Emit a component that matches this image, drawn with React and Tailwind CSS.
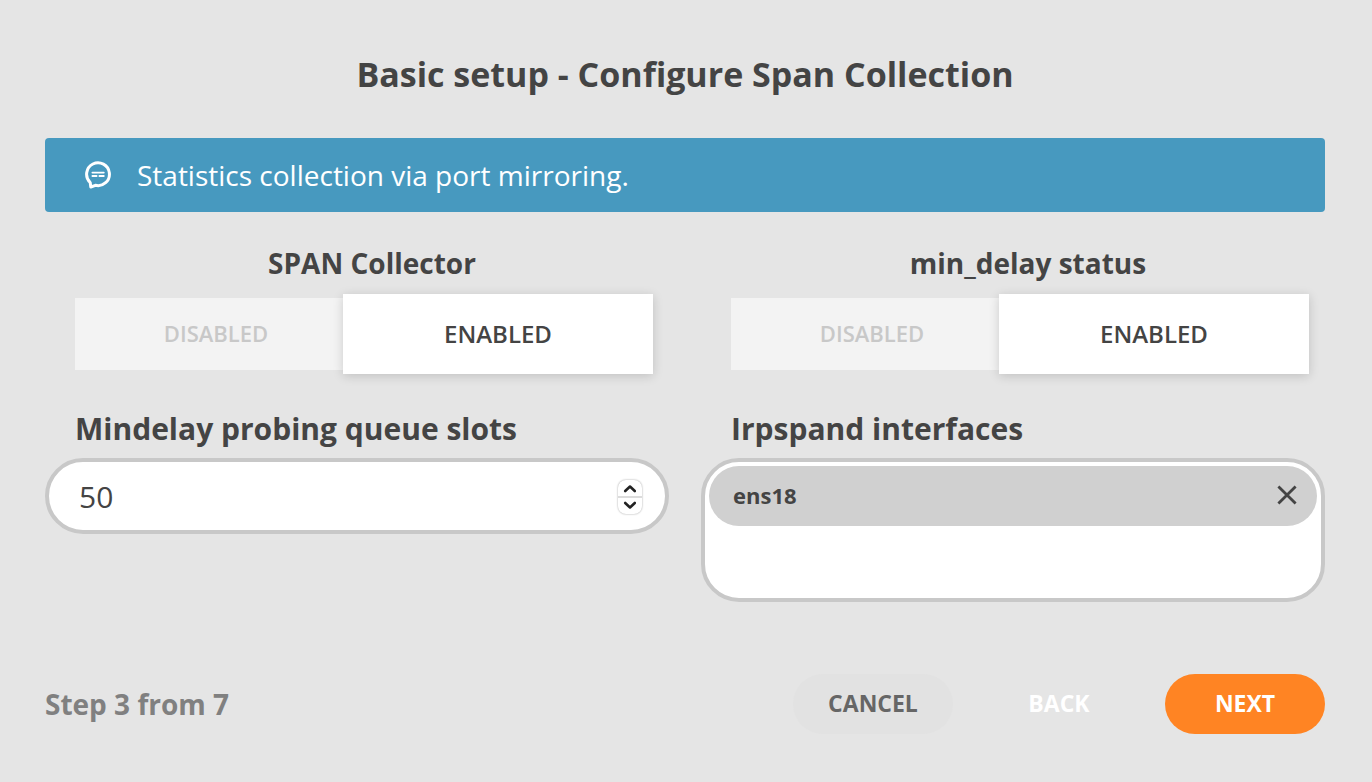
import React, {useState} from "react";

function Toggle({name, label}) {

    const [enabled, setEnabled] = useState(true);

    const base = "shrink-0 flex items-center justify-center cursor-pointer font-semibold";
    const on = "relative w-[calc(50%+28px)] h-20 -my-1 -mx-3.5 bg-white text-2xl text-[#444444] shadow-[0_2px_10px_rgba(0,0,0,0.16)]";
    const off = "w-1/2 h-[72px] pb-0.5 text-[22px] text-[#c8c8c8]";

    return (
        <fieldset className="min-w-0">
            <legend className="w-full pl-[30px] text-center text-[28px] leading-[38px] font-bold">{label}</legend>
            <div className="mt-4 mx-[30px] flex bg-[#f3f3f3]">
                <label className={`${base} ${enabled ? off : on}`}>
                    <input className="sr-only" type="radio" name={name} checked={!enabled} onChange={() => setEnabled(false)}/>
                    DISABLED
                </label>
                <label className={`${base} ${enabled ? on : off}`}>
                    <input className="sr-only" type="radio" name={name} checked={enabled} onChange={() => setEnabled(true)}/>
                    ENABLED
                </label>
            </div>
        </fieldset>
    );
}

function NumberField({id, label}) {

    const [value, setValue] = useState(50);

    return (
        <div>
            <label htmlFor={id} className="block pl-[30px] text-[30px] leading-[38px] font-bold">{label}</label>
            <div className="mt-2.5 h-[76px] flex items-center rounded-full border-4 border-[#c8c8c8] bg-white pt-0.5 pl-[30px] pr-[23px]">
                <input
                    id={id}
                    className="flex-1 min-w-0 text-[30px] leading-10 bg-transparent outline-none [appearance:textfield] [&::-webkit-inner-spin-button]:appearance-none"
                    type="number"
                    value={value}
                    onChange={(e) => setValue(Number(e.target.value))}
                />
                <div className="w-6 h-[34px] flex flex-col rounded-lg bg-white shadow-[0_0_2px_rgba(0,0,0,0.4)] overflow-hidden">
                    <button type="button" aria-label="Increase" className="flex-1 flex items-center justify-center border-b border-[#dcdcdc]" onClick={() => setValue(value + 1)}>
                        <svg width="14" height="10" viewBox="0 0 14 10" fill="none" stroke="#222222" strokeWidth="2.6" strokeLinecap="round" strokeLinejoin="round"><path d="M2.2 8 7 3.5l4.8 4.5"/></svg>
                    </button>
                    <button type="button" aria-label="Decrease" className="flex-1 flex items-center justify-center border-t border-[#dcdcdc]" onClick={() => setValue(value - 1)}>
                        <svg width="14" height="10" viewBox="0 0 14 10" fill="none" stroke="#222222" strokeWidth="2.6" strokeLinecap="round" strokeLinejoin="round"><path d="M2.2 2 7 6.5l4.8-4.5"/></svg>
                    </button>
                </div>
            </div>
        </div>
    );
}

function TagField({id, label}) {

    const [tags, setTags] = useState(["ens18"]);
    const [text, setText] = useState("");

    const onKeyDown = (e) => {
        if(e.key === "Enter" && text) {
            e.preventDefault();
            setTags([...tags, text]);
            setText("");
        }
    };

    return (
        <div>
            <label htmlFor={id} className="block pl-[30px] text-[30px] leading-[38px] font-bold">{label}</label>
            <div className="mt-2.5 rounded-[38px] border-4 border-[#c8c8c8] bg-white p-1">
                {tags.map(tag => (
                    <div key={tag} className="h-[60px] flex items-center justify-between rounded-full bg-[#d0d0d0] pb-0.5 pl-6 pr-5 text-[22px] font-bold">
                        {tag}
                        <button type="button" aria-label={"Remove " + tag} onClick={() => setTags(tags.filter(t => t !== tag))}>
                            <svg width="20" height="20" viewBox="0 0 20 20" fill="none" stroke="#444444" strokeWidth="2.8"><path d="M1.4 1.4l17.2 17.2M18.6 1.4L1.4 18.6"/></svg>
                        </button>
                    </div>
                ))}
                <input id={id} className="block w-full h-[68px] px-6 text-[22px] bg-transparent outline-none" type="text" value={text} onChange={(e) => setText(e.target.value)} onKeyDown={onKeyDown}/>
            </div>
        </div>
    );
}

export default function App() {
    return (
        <form className="min-h-screen bg-[#e5e5e5] pt-12 pb-12 pl-[45px] pr-[47px] font-['Open_Sans',sans-serif] text-[#444444]" onSubmit={(e) => e.preventDefault()}>
            <h1 className="text-center text-[34px] leading-[52px] font-bold">Basic setup - Configure Span Collection</h1>

            <div className="mt-[38px] h-[74px] flex items-center gap-6 rounded bg-[#4799bf] pl-[38px] text-[28px] text-white">
                <svg width="30" height="30" viewBox="0 0 30 30" fill="none" stroke="currentColor" strokeLinecap="round" strokeLinejoin="round">
                    <path strokeWidth="3" d="M7.2 22.5A11.4 11.4 0 1 1 12.4 25.3L7.8 27Z"/>
                    <path strokeWidth="1.8" d="M9.4 12.6h11.4M9.4 16h4.2M16.4 16h4.4"/>
                </svg>
                <p>Statistics collection via port mirroring.</p>
            </div>

            <div className="mt-8 grid grid-cols-2 gap-x-8 gap-y-10">
                <Toggle name="span_collector" label="SPAN Collector"/>
                <Toggle name="min_delay" label="min_delay status"/>
                <NumberField id="queue_slots" label="Mindelay probing queue slots"/>
                <TagField id="interfaces" label="Irpspand interfaces"/>
            </div>

            <div className="mt-[72px] flex items-center justify-between">
                <p className="text-[28px] font-bold text-[#808080]">Step 3 from 7</p>
                <div className="flex gap-[26px] text-[23px] font-bold">
                    <button type="button" className="w-40 h-[60px] pb-0.5 rounded-full bg-[#e2e2e2] text-[#666666]">CANCEL</button>
                    <button type="button" className="w-40 h-[60px] pb-0.5 rounded-full text-white">BACK</button>
                    <button type="submit" className="w-40 h-[60px] pb-0.5 rounded-full bg-[#ff8423] text-white">NEXT</button>
                </div>
            </div>
        </form>
    );
}
